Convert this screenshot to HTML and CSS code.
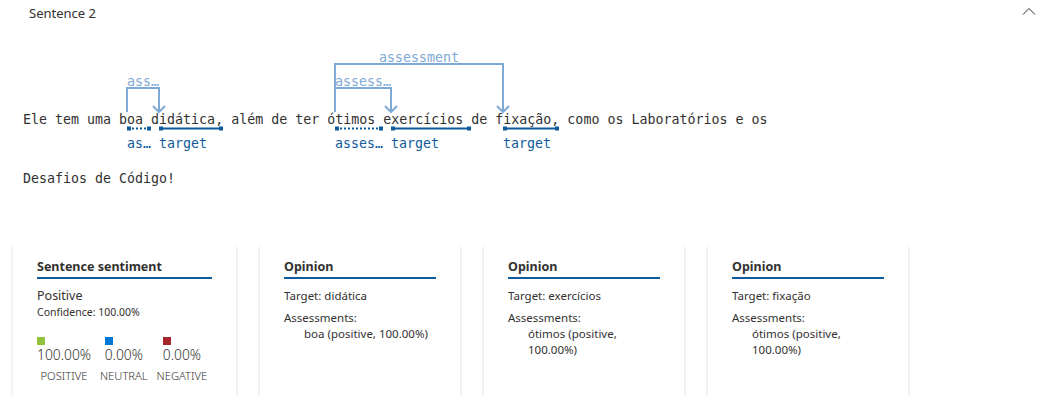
FILE: index.html
```html
<!DOCTYPE html>
<html lang="pt">
<head>
<meta charset="utf-8">
<title>Sentence 2</title>
<link rel="stylesheet" href="styles.css">
</head>
<body>
<div class="header">
  <span class="header-title">Sentence 2</span>
  <svg class="chevron" width="14" height="8" viewBox="0 0 14 8"><path d="M1 7.5 L7 1.5 L13 7.5" fill="none" stroke="#323130" stroke-width="1"/></svg>
</div>

<div class="sentence">
  <div class="line line-annotated">
    <svg class="annot" width="800" height="129" viewBox="0 0 800 129">
      <g class="light" fill="none" stroke="#80aad6" stroke-width="2">
        <path d="M104 72 V48 H136 V72"/>
        <path d="M130 66 L136 72 L142 66"/>
        <path d="M312 72 V24 H480 V72"/>
        <path d="M474 66 L480 72 L486 66"/>
        <path d="M312 72 V48 H368 V72"/>
        <path d="M362 66 L368 72 L374 66"/>
      </g>
      <g class="light-text" fill="#80aad6">
        <text x="104" y="46">ass…</text>
        <text x="396" y="22" text-anchor="middle">assessment</text>
        <text x="312" y="46">assess…</text>
      </g>
      <g fill="#0f5b9b">
        <rect x="104" y="86.5" width="4" height="4"/>
        <rect x="124" y="86.5" width="4" height="4"/>
        <rect x="136" y="86.5" width="4" height="4"/>
        <rect x="196" y="86.5" width="4" height="4"/>
        <rect x="312" y="86.5" width="4" height="4"/>
        <rect x="356" y="86.5" width="4" height="4"/>
        <rect x="368" y="86.5" width="4" height="4"/>
        <rect x="444" y="86.5" width="4" height="4"/>
        <rect x="480" y="86.5" width="4" height="4"/>
        <rect x="532" y="86.5" width="4" height="4"/>
      </g>
      <g fill="none" stroke="#0f5b9b" stroke-width="2">
        <path d="M109 88.5 H124" stroke-dasharray="2 2"/>
        <path d="M140 88.5 H196"/>
        <path d="M317 88.5 H356" stroke-dasharray="2 2"/>
        <path d="M372 88.5 H444"/>
        <path d="M484 88.5 H532"/>
      </g>
      <g fill="#0f5b9b">
        <text x="104" y="108">as…</text>
        <text x="136" y="108">target</text>
        <text x="312" y="108">asses…</text>
        <text x="368" y="108">target</text>
        <text x="480" y="108">target</text>
      </g>
    </svg>
    <div class="line-text">Ele tem uma boa didática, além de ter ótimos exercícios de fixação, como os Laboratórios e os</div>
  </div>
  <div class="line">
    <div class="line-text">Desafios de Código!</div>
  </div>
</div>

<div class="cards">
  <div class="card card-sentiment">
    <div class="card-title">Sentence sentiment</div>
    <div class="sent-label">Positive</div>
    <div class="sent-conf">Confidence: 100.00%</div>
    <div class="legend">
      <div class="legend-col">
        <div class="legend-top">
          <span class="swatch swatch-pos"></span>
          <span class="legend-pct">100.00%</span>
        </div>
        <span class="legend-name">POSITIVE</span>
      </div>
      <div class="legend-col">
        <div class="legend-top">
          <span class="swatch swatch-neu"></span>
          <span class="legend-pct">0.00%</span>
        </div>
        <span class="legend-name">NEUTRAL</span>
      </div>
      <div class="legend-col">
        <div class="legend-top">
          <span class="swatch swatch-neg"></span>
          <span class="legend-pct">0.00%</span>
        </div>
        <span class="legend-name">NEGATIVE</span>
      </div>
    </div>
  </div>

  <div class="card card-opinion">
    <div class="card-title">Opinion</div>
    <div class="op-target">Target: didática</div>
    <div class="op-assess">Assessments:</div>
    <div class="op-item">boa (positive, 100.00%)</div>
  </div>

  <div class="card card-opinion">
    <div class="card-title">Opinion</div>
    <div class="op-target">Target: exercícios</div>
    <div class="op-assess">Assessments:</div>
    <div class="op-item">ótimos (positive, 100.00%)</div>
  </div>

  <div class="card card-opinion">
    <div class="card-title">Opinion</div>
    <div class="op-target">Target: fixação</div>
    <div class="op-assess">Assessments:</div>
    <div class="op-item">ótimos (positive, 100.00%)</div>
  </div>
</div>
</body>
</html>
```

FILE: styles.css
```css
html, body {
  margin: 0;
  padding: 0;
  background: #ffffff;
}

body {
  font-family: "Segoe UI", "Noto Sans", sans-serif;
  color: #323130;
}

.header {
  display: flex;
  justify-content: space-between;
  align-items: flex-start;
  height: 28px;
  box-sizing: border-box;
  padding: 3px 18px 0 29px;
}

.header-title {
  font-size: 13px;
  line-height: 20px;
}

.chevron {
  display: block;
  margin-top: 4px;
}

.sentence {
  padding: 12px 0 0 23px;
  font-family: "DejaVu Sans Mono", "Liberation Mono", monospace;
  font-size: 13.3px;
  color: #323130;
}

.line {
  position: relative;
}

.line-annotated {
  padding: 70px 0 39px;
}

.line-text {
  line-height: 20px;
  white-space: pre;
  position: relative;
}

.annot {
  position: absolute;
  left: 0;
  top: 0;
  overflow: visible;
}

.annot text {
  font-family: "DejaVu Sans Mono", "Liberation Mono", monospace;
  font-size: 13.3px;
}

.cards {
  display: flex;
  gap: 24px;
  padding: 56px 0 0 13px;
}

.card {
  box-sizing: border-box;
  height: 150px;
  padding: 12px 24px 0;
  background: #ffffff;
  box-shadow: 0 1.6px 3.6px rgba(0, 0, 0, 0.17), 0 0.3px 0.9px rgba(0, 0, 0, 0.13);
}

.card-sentiment {
  width: 223px;
}

.card-opinion {
  width: 200px;
}

.card-title {
  font-size: 12.5px;
  font-weight: 700;
  line-height: 20px;
  border-bottom: 2px solid #0f5b9b;
}

.sent-label {
  margin-top: 9px;
  font-size: 12.5px;
  line-height: 16px;
}

.sent-conf {
  margin-top: 1px;
  font-size: 10.5px;
  line-height: 14px;
}

.legend {
  display: flex;
  gap: 9px;
  margin-top: 18px;
}

.legend-col {
  display: flex;
  flex-direction: column;
  align-items: center;
}

.legend-top {
  display: flex;
  flex-direction: column;
  align-items: flex-start;
}

.swatch {
  display: block;
  width: 8px;
  height: 8px;
  margin-bottom: 1px;
}

.swatch-pos { background: #92c13c; }
.swatch-neu { background: #0078d4; }
.swatch-neg { background: #a4262c; }

.legend-pct {
  font-size: 13.8px;
  font-weight: 300;
  line-height: 18px;
}

.legend-name {
  margin-top: 5px;
  font-size: 11.2px;
  line-height: 14px;
  font-weight: 300;
}

.op-target {
  margin-top: 9px;
  font-size: 11.5px;
  line-height: 16px;
}

.op-assess {
  margin-top: 6px;
  font-size: 11.5px;
  line-height: 16px;
}

.op-item {
  padding-left: 20px;
  font-size: 11.5px;
  line-height: 16px;
}
```
